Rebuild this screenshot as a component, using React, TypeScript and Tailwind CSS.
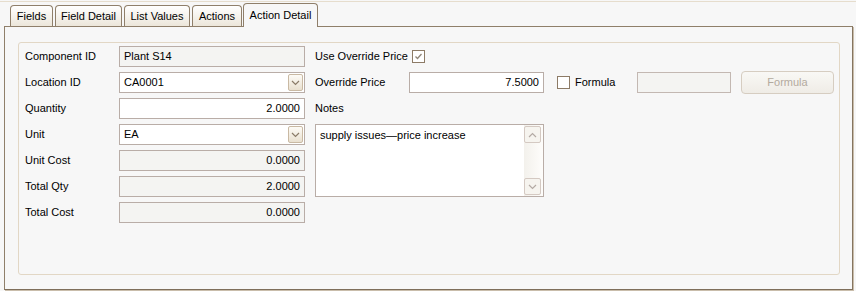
import React from 'react'

const tabs = [
  { label: 'Fields', w: 'w-[43px]' },
  { label: 'Field Detail', w: 'w-[67px]' },
  { label: 'List Values', w: 'w-[66px]' },
  { label: 'Actions', w: 'w-[50px]' },
]

const inputBase =
  'h-[21px] border border-[#b9ada7] flex items-center px-[4px] text-[11px] leading-none text-black'

function Chevron({ up = false, color = '#8a7b68' }: { up?: boolean; color?: string }) {
  return (
    <svg width="9" height="6" viewBox="0 0 9 6">
      <path
        d={up ? 'M1 5 L4.5 1.5 L8 5' : 'M1 1 L4.5 4.5 L8 1'}
        fill="none"
        stroke={color}
        strokeWidth="1.2"
      />
    </svg>
  )
}

function Combo({ value }: { value: string }) {
  return (
    <div className={`${inputBase} bg-white justify-between pr-[1px]`}>
      <span>{value}</span>
      <div className="w-[15px] h-[17px] rounded-[2px] border border-[#c9b9a3] bg-gradient-to-b from-[#fdfbf6] to-[#e9e0d0] flex items-center justify-center">
        <Chevron />
      </div>
    </div>
  )
}

function Field({ value, readOnly = false, right = false }: { value: string; readOnly?: boolean; right?: boolean }) {
  return (
    <div
      className={`${inputBase} ${readOnly ? 'bg-[#f4f4f2]' : 'bg-white'} ${right ? 'justify-end' : ''}`}
    >
      {value}
    </div>
  )
}

function Check({ checked = false }: { checked?: boolean }) {
  return (
    <div className="w-[13px] h-[13px] border border-[#8d7b66] bg-white flex items-center justify-center">
      {checked && (
        <svg width="9" height="9" viewBox="0 0 9 9">
          <path d="M1.5 4.5 L3.5 6.5 L7.5 2" fill="none" stroke="#8f8578" strokeWidth="1.3" />
        </svg>
      )}
    </div>
  )
}

function Label({ children }: { children: React.ReactNode }) {
  return <div className="h-[21px] flex items-center text-[11px] text-black">{children}</div>
}

export default function App() {
  return (
    <div
      className="w-[856px] h-[291px] bg-[#f7f7f7] overflow-hidden"
      style={{ fontFamily: '"Liberation Sans", Arial, sans-serif' }}
    >
      <div className="h-[1px]" />
      <div className="h-[1px] bg-[#e6ddcd]" />
      <div className="h-[1px]" />

      {/* tab strip */}
      <div className="flex items-end h-[23px] pl-[10px] gap-[2px]">
        {tabs.map((t) => (
          <div
            key={t.label}
            className={`${t.w} h-[21px] rounded-t-[4px] border border-b-0 border-[#8f7f6a] bg-gradient-to-b from-[#ffffff] to-[#ece6da] flex items-center justify-center pt-[1px] text-[11px] text-black`}
          >
            {t.label}
          </div>
        ))}
        <div className="w-[75px] h-[24px] -mb-[1px] ml-[-1px] relative z-10 rounded-t-[4px] border border-b-0 border-[#8f7f6a] bg-[#f7f7f7] flex items-center justify-center text-[11px] text-black pb-[1px]">
          Action Detail
        </div>
      </div>

      {/* panel */}
      <div className="ml-[4px] w-[849px] h-[264px] border border-[#8f7f6a] border-r-[#857560] border-b-[#7e6e5a] shadow-[1px_1px_0_#c9bdab] bg-[#f7f7f7] pt-[15px] pl-[13px]">
        <div className="w-[822px] h-[233px] rounded-[3px] border border-[#e2d7c5] pt-[3px] pl-[6px]">
          <div className="grid grid-cols-[94px_186px_10px_94px_135px_1fr] gap-y-[5px] auto-rows-[21px]">
            {/* row 1 */}
            <Label>Component ID</Label>
            <Field value="Plant S14" readOnly />
            <div />
            <div className="col-span-2 flex items-center text-[11px]">
              <span className="w-[97px]">Use Override Price</span>
              <Check checked />
            </div>
            <div />

            {/* row 2 */}
            <Label>Location ID</Label>
            <Combo value="CA0001" />
            <div />
            <Label>Override Price</Label>
            <Field value="7.5000" right />
            <div className="flex items-center">
              <div className="w-[93px] pl-[13px] flex items-center gap-[5px] text-[11px]">
                <Check />
                <span>Formula</span>
              </div>
              <div className="w-[94px] h-[21px] border border-[#c3b8b2] bg-[#f4f4f2]" />
              <div className="ml-[10px] w-[93px] h-[23px] rounded-[4px] border border-[#d6cdc1] bg-gradient-to-b from-[#f9f8f5] to-[#efece6] flex items-center justify-center text-[11px] text-[#b3aa9e]">
                Formula
              </div>
            </div>

            {/* row 3 */}
            <Label>Quantity</Label>
            <Field value="2.0000" right />
            <div />
            <Label>Notes</Label>
            <div />
            <div />

            {/* row 4 */}
            <Label>Unit</Label>
            <Combo value="EA" />
            <div />
            <div className="col-span-2 row-span-3 border border-[#b9ada7] bg-white flex">
              <div className="flex-1 px-[4px] pt-[3px] text-[11px] leading-[14px] text-black">
                supply issues—price increase
              </div>
              <div className="w-[19px] py-[1px] pr-[1px] flex flex-col justify-between bg-gradient-to-r from-[#f3f1ec] to-[#fefdfb]">
                <div className="w-[17px] h-[17px] rounded-[2px] border border-[#d4c9c2] bg-[#f6f4ef] flex items-center justify-center">
                  <Chevron up color="#b4aaa4" />
                </div>
                <div className="w-[17px] h-[17px] rounded-[2px] border border-[#d4c9c2] bg-[#f6f4ef] flex items-center justify-center">
                  <Chevron color="#b4aaa4" />
                </div>
              </div>
            </div>
            <div />

            {/* row 5 */}
            <Label>Unit Cost</Label>
            <Field value="0.0000" readOnly right />
            <div />
            <div />

            {/* row 6 */}
            <Label>Total Qty</Label>
            <Field value="2.0000" readOnly right />
            <div />
            <div />

            {/* row 7 */}
            <Label>Total Cost</Label>
            <Field value="0.0000" readOnly right />
          </div>
        </div>
      </div>
    </div>
  )
}
